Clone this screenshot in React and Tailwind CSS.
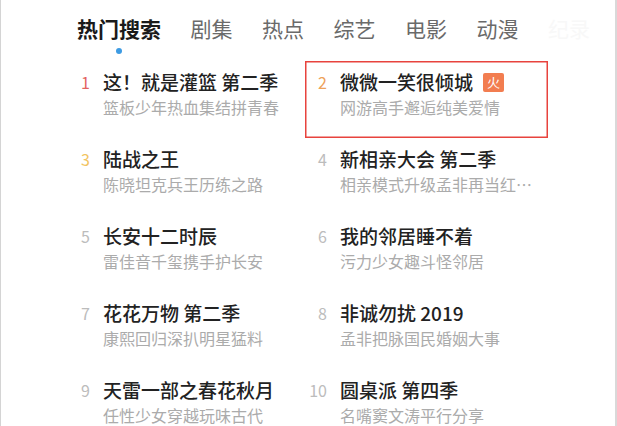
const tabs = ['热门搜索', '剧集', '热点', '综艺', '电影', '动漫'];

const items = [
    { rank: 1, title: '这！就是灌篮 第二季', desc: '篮板少年热血集结拼青春' },
    { rank: 2, title: '微微一笑很倾城', desc: '网游高手邂逅纯美爱情', hot: true, marked: true },
    { rank: 3, title: '陆战之王', desc: '陈晓坦克兵王历练之路' },
    { rank: 4, title: '新相亲大会 第二季', desc: '相亲模式升级孟非再当红娘牵线' },
    { rank: 5, title: '长安十二时辰', desc: '雷佳音千玺携手护长安' },
    { rank: 6, title: '我的邻居睡不着', desc: '污力少女趣斗怪邻居' },
    { rank: 7, title: '花花万物 第二季', desc: '康熙回归深扒明星猛料' },
    { rank: 8, title: '非诚勿扰 2019', desc: '孟非把脉国民婚姻大事' },
    { rank: 9, title: '天雷一部之春花秋月', desc: '任性少女穿越玩味古代' },
    { rank: 10, title: '圆桌派 第四季', desc: '名嘴窦文涛平行分享' },
];

const rankColor = (rank) => {
    if (rank === 1) return 'text-[#e3635f]';
    if (rank === 2) return 'text-[#eea25a]';
    if (rank === 3) return 'text-[#f2c462]';
    return 'text-[#bcbcbc]';
};

function Row({ item }) {
    return (
        <div
            className={
                'h-[77px] pt-[9px] ' +
                (item.marked ? 'ring-[1.5px] ring-inset ring-[#e8433d]' : '')
            }
        >
            <div className="flex items-center">
                <span
                    className={`w-[22px] text-right text-[16px] leading-[24px] ${rankColor(item.rank)}`}
                >
                    {item.rank}
                </span>
                <span className="ml-[13px] text-[19px] leading-[24px] font-medium text-[#222]">
                    {item.title}
                </span>
                {item.hot && (
                    <span className="ml-[10px] flex h-[19px] w-[21px] items-center justify-center rounded-[2px] bg-[#f27d50] text-[13px] text-white">
                        火
                    </span>
                )}
            </div>
            <div className="mt-[1px] ml-[35px] w-[193px] truncate text-[16px] leading-[24px] text-[#ababab]">
                {item.desc}
            </div>
        </div>
    );
}

export default function App() {
    return (
        <div
            className="h-[426px] w-[617px] overflow-hidden border-l border-r-2 border-l-[#d4d4d4] border-r-[#d9d9d9] bg-white"
            style={{ fontFamily: '"Noto Sans CJK SC", "Noto Sans", sans-serif' }}
        >
            <div className="h-[61px] pt-[13px] pl-[76px]">
                <div className="flex gap-[29.5px]">
                    {tabs.map((tab, i) => (
                        <div key={tab} className="flex flex-col items-center">
                            <span
                                className={
                                    i === 0
                                        ? 'text-[21px] leading-[30px] font-bold text-[#1a1a1a]'
                                        : 'text-[21px] leading-[30px] text-[#6a6a6a]'
                                }
                            >
                                {tab}
                            </span>
                            {i === 0 && (
                                <span className="mt-[5px] h-[6px] w-[6px] rounded-full bg-[#3d9be3]" />
                            )}
                        </div>
                    ))}
                    <span className="text-[21px] leading-[30px] text-[#f8f8f8]">纪录</span>
                </div>
            </div>
            <div className="grid grid-cols-[237px_243px] pl-[67px]">
                {items.map((item) => (
                    <Row key={item.rank} item={item} />
                ))}
            </div>
        </div>
    );
}
